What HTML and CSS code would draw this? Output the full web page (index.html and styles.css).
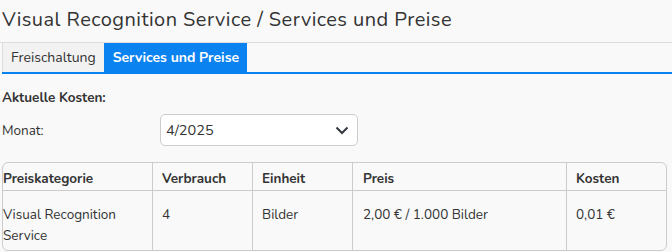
FILE: index.html
```html
<!DOCTYPE html>
<html lang="de">

<head>
    <meta charset="UTF-8">
    <meta name="viewport" content="width=device-width, initial-scale=1.0">
    <title>Services und Preise</title>
    <link rel="stylesheet" href="styles.css">
</head>

<body>
    <h1 class="page-title">Visual Recognition Service / Services und Preise</h1>

    <div class="tabs">
        <a class="tab">Freischaltung</a>
        <a class="tab active">Services und Preise</a>
    </div>

    <div class="content">
        <h2 class="section-title">Aktuelle Kosten:</h2>

        <div class="form-row">
            <label class="form-label" for="month">Monat:</label>
            <div class="select-wrap">
                <select id="month" class="select">
                    <option>4/2025</option>
                </select>
                <svg class="select-arrow" width="14" height="9" viewBox="0 0 14 9">
                    <path d="M1.5 1.5 L7 7 L12.5 1.5" fill="none" stroke="#343a40" stroke-width="2" />
                </svg>
            </div>
        </div>

        <table class="costs">
            <thead>
                <tr>
                    <th class="col-cat">Preiskategorie</th>
                    <th class="col-use">Verbrauch</th>
                    <th class="col-unit">Einheit</th>
                    <th class="col-price">Preis</th>
                    <th class="col-cost">Kosten</th>
                </tr>
            </thead>
            <tbody>
                <tr>
                    <td>Visual Recognition Service</td>
                    <td>4</td>
                    <td>Bilder</td>
                    <td class="price">2,00 € / 1.000 Bilder</td>
                    <td>0,01 €</td>
                </tr>
            </tbody>
        </table>
    </div>
</body>

</html>
```

FILE: styles.css
```css
body {
    margin: 0;
    background-color: #f9f9f9;
    font-family: "Nunito", "Lato", "Open Sans", sans-serif;
    color: #333;
    font-size: 13px;
}

.page-title {
    margin: 0;
    padding: 8px 2px 0;
    height: 34px;
    font-size: 20px;
    font-weight: 400;
    letter-spacing: 0.45px;
    line-height: 24px;
    border-bottom: 1px solid #ddd;
}

.tabs {
    display: flex;
    margin-left: 2px;
    border-bottom: 2px solid #0a82f0;
}

.tab {
    display: block;
    height: 29px;
    line-height: 30px;
    padding: 0 8px;
    font-size: 14px;
    color: #333;
    background-color: #f2f2f2;
    border-left: 1px solid #ddd;
    cursor: pointer;
}

.tab.active {
    background-color: #0a82f0;
    color: #fff;
    font-weight: 700;
    border-left-color: #0a82f0;
}

.content {
    padding: 0 5px 0 2px;
}

.section-title {
    margin: 0;
    padding-top: 15px;
    font-size: 13.5px;
    font-weight: 700;
    line-height: 17px;
}

.form-row {
    display: flex;
    align-items: center;
    margin-top: 8px;
    font-size: 13.5px;
}

.form-label {
    width: 158px;
}

.select-wrap {
    position: relative;
    width: 198px;
}

.select {
    appearance: none;
    display: block;
    width: 100%;
    height: 32px;
    padding: 0 10px 0 5px;
    font-family: inherit;
    font-size: 14.5px;
    color: #333;
    background-color: #fff;
    border: 1px solid #ccc;
    border-radius: 5px;
}

.select-arrow {
    position: absolute;
    right: 9px;
    top: 12px;
    pointer-events: none;
}

.costs {
    width: 100%;
    margin-top: 16px;
    border-collapse: separate;
    border-spacing: 0;
    border: 1px solid #ccc;
    border-radius: 6px;
    font-size: 13.5px;
}

.costs th,
.costs td {
    text-align: left;
    vertical-align: top;
    box-sizing: border-box;
    padding: 0 8px 0 0;
    border-right: 1px solid #ccc;
}

.costs th:last-child,
.costs td:last-child {
    border-right: none;
}

.costs th {
    height: 28px;
    padding-top: 6px;
    line-height: 20px;
    font-weight: 700;
    border-bottom: 1px solid #ccc;
}

.costs td {
    height: 59px;
    padding-top: 13px;
    line-height: 21px;
}

.costs th:not(:first-child),
.costs td:not(:first-child) {
    padding-left: 9px;
}

.costs td.price,
.costs th.col-price {
    padding-left: 10px;
}

.col-cat {
    width: 150px;
}

.col-use {
    width: 100px;
}

.col-unit {
    width: 100px;
}

.col-price {
    width: 214px;
}
```
